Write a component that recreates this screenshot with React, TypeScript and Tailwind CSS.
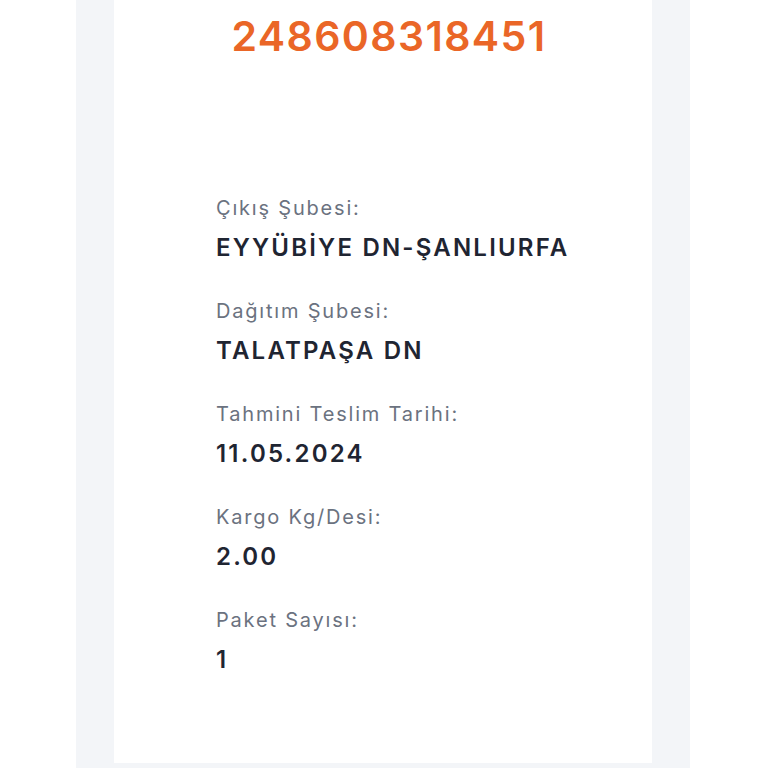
type Satir = {
  etiket: string;
  deger: string;
};

const satirlar: Satir[] = [
  { etiket: "Çıkış Şubesi:", deger: "EYYÜBİYE DN-ŞANLIURFA" },
  { etiket: "Dağıtım Şubesi:", deger: "TALATPAŞA DN" },
  { etiket: "Tahmini Teslim Tarihi:", deger: "11.05.2024" },
  { etiket: "Kargo Kg/Desi:", deger: "2.00" },
  { etiket: "Paket Sayısı:", deger: "1" },
];

export default function App() {
  return (
    <div className="w-[768px] h-[768px] bg-white overflow-hidden font-['Inter',sans-serif]">
      <div className="ml-[76px] w-[614px] h-[768px] bg-[#f3f5f8] px-[38px] pb-[5px]">
        <div className="h-full bg-white flex flex-col">
          <h1 className="mt-[12px] text-center pl-[12px] text-[41px] leading-[48px] font-semibold text-[#ea6627] tracking-[1.4px]">
            248608318451
          </h1>

          <div className="mt-[134px] pl-[102px] flex flex-col gap-[33px]">
            {satirlar.map((s) => (
              <div key={s.etiket} className="flex flex-col">
                <span className="text-[20px] leading-[28px] text-[#6b7280] tracking-[1.8px]">{s.etiket}</span>
                <span className="mt-[10px] text-[24px] leading-[32px] font-semibold text-[#1f2532] tracking-[2.2px]">
                  {s.deger}
                </span>
              </div>
            ))}
          </div>
        </div>
      </div>
    </div>
  );
}
